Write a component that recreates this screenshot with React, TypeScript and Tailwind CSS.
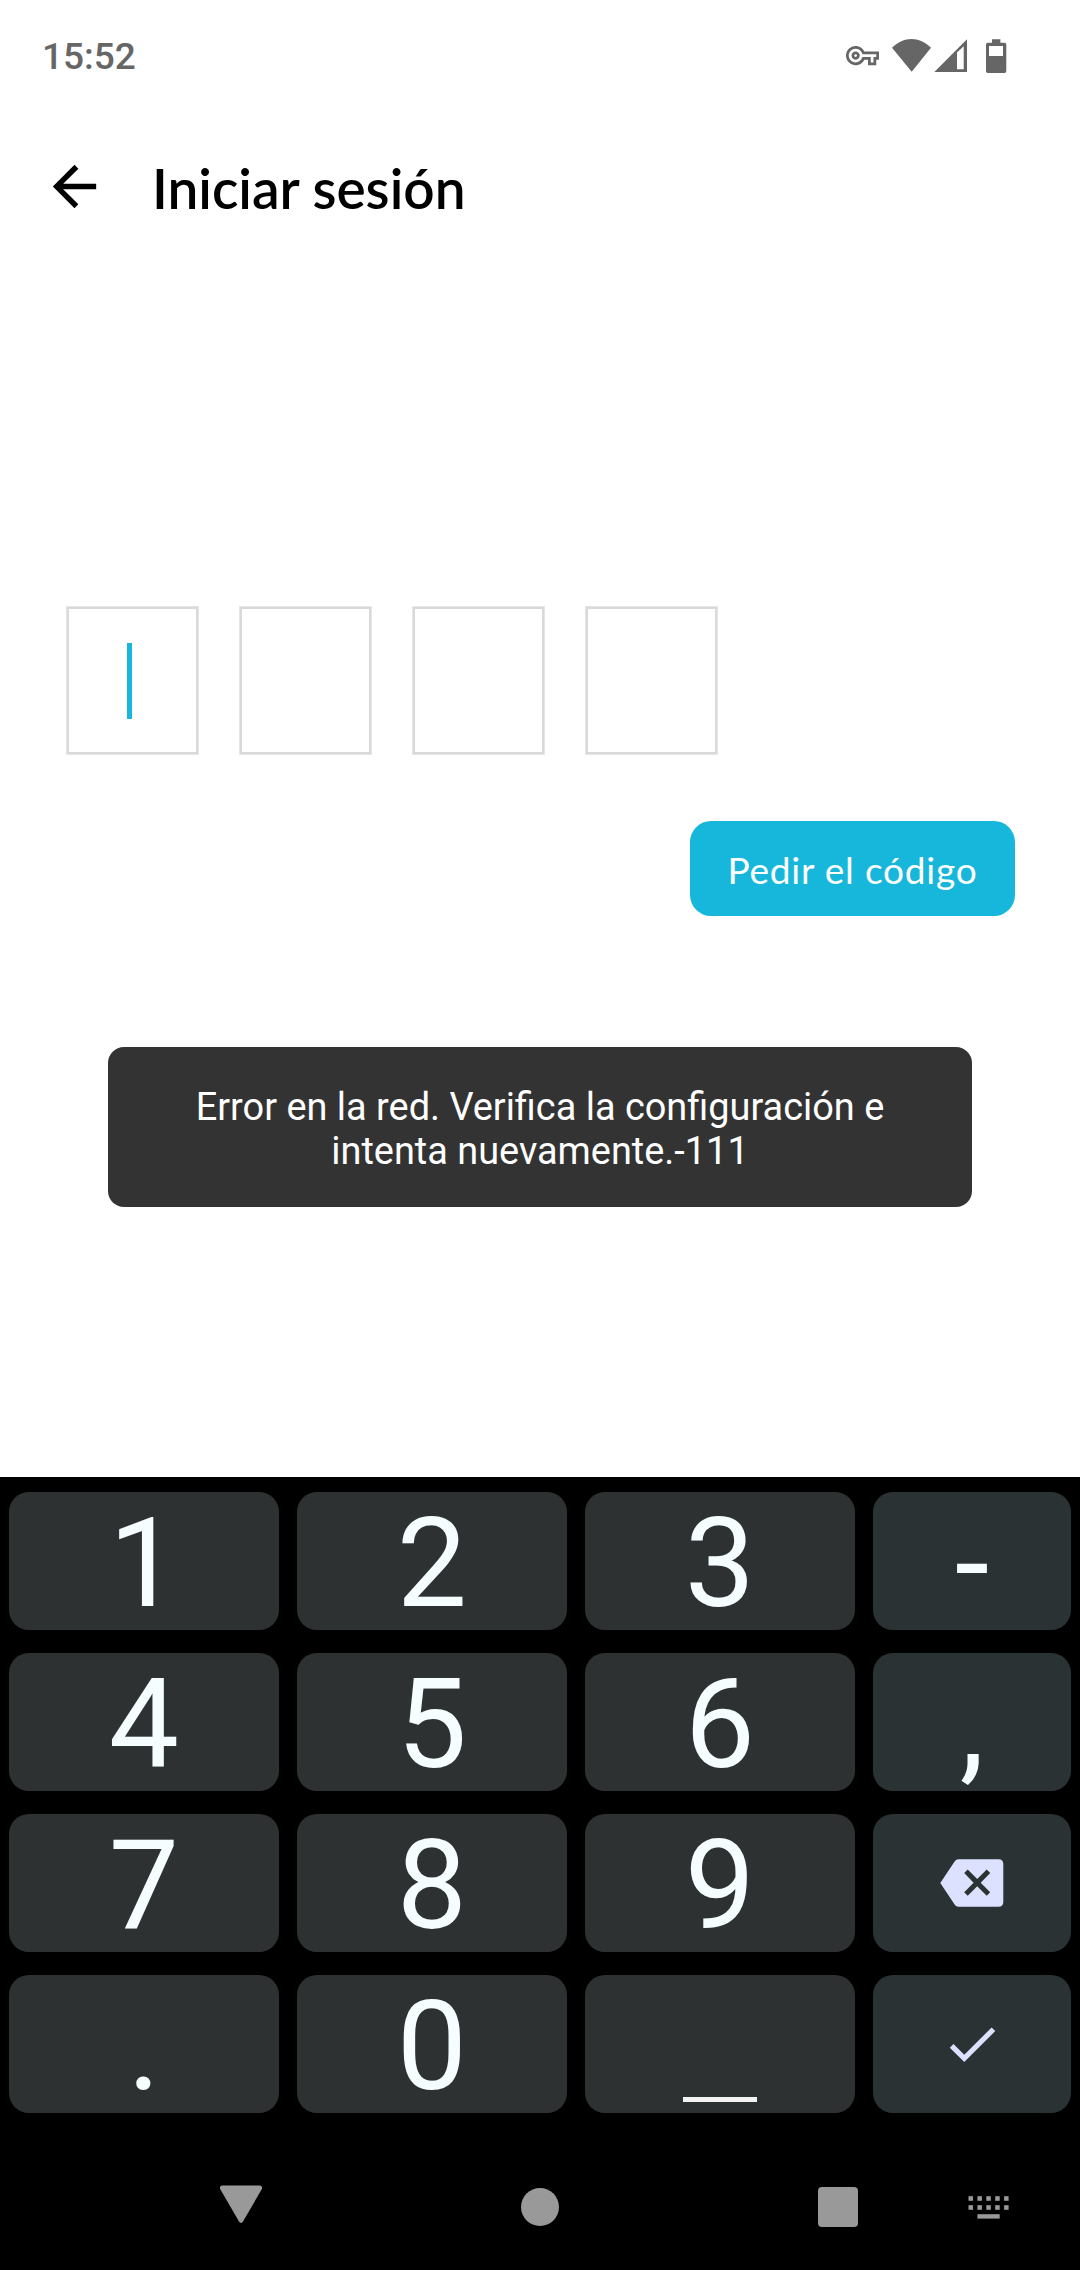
import type { ReactNode } from "react";
import { MdArrowBack, MdCheck, MdOutlineVpnKey } from "react-icons/md";

function StatusBar() {
  return (
    <header className="flex h-[111px] items-center justify-between pl-[42px] pr-[60px] text-[#666666]">
      <span className="mt-[2px] text-[37px] font-medium leading-none">15:52</span>
      <div className="flex h-[36px] items-center">
        <MdOutlineVpnKey className="size-[33px]" />
        <svg className="ml-[11px] h-[36px] w-[130px]" viewBox="890 37 130 36" fill="currentColor">
          <path d="M911.7 70.7 892 46.8C903.5 35.2 919.5 35.2 931 46.8Z" />
          <path fillRule="evenodd" d="M934.3 71 967 38.3V71ZM957 51.5V68.2H963.7V45.3Z" />
          <path
            fillRule="evenodd"
            d="M992 38.3h8.4v3.4h4.1q1.8 0 1.8 1.8v26.7q0 1.8-1.8 1.8h-16.7q-1.8 0-1.8-1.8V43.5q0-1.8 1.8-1.8h4.2ZM989 45v10h14V45Z"
          />
        </svg>
      </div>
    </header>
  );
}

function CodeInputs() {
  return (
    <div className="mt-[363px] flex gap-[39.85px] pl-[66px]">
      {[0, 1, 2, 3].map((slot) => (
        <div key={slot} className="h-[149px] w-[133px] border border-[#e6e6e6]">
          <div className="flex h-full items-center border-2 border-[#d9d9d9] pl-[58px]">
            {slot === 0 && <span className="h-[76px] w-[5px] bg-[#16b7da]" />}
          </div>
        </div>
      ))}
    </div>
  );
}

function Key({ side = false, children }: { side?: boolean; children: ReactNode }) {
  return (
    <button
      className={`flex h-[138px] items-center justify-center rounded-[20px] text-[125px] leading-[138px] text-[#f6fdff] ${
        side ? "bg-[#2a3234]" : "bg-[#2d3132]"
      }`}
    >
      {children}
    </button>
  );
}

function Label({ children }: { children: ReactNode }) {
  return <span className="mt-[6px]">{children}</span>;
}

function Keyboard() {
  return (
    <div className="grid grid-cols-[270px_270px_270px_198px] gap-x-[18px] gap-y-[23px] px-[9px] pt-[15px]">
      <Key><Label>1</Label></Key>
      <Key><Label>2</Label></Key>
      <Key><Label>3</Label></Key>
      <Key side><Label>-</Label></Key>
      <Key><Label>4</Label></Key>
      <Key><Label>5</Label></Key>
      <Key><Label>6</Label></Key>
      <Key side><Label>,</Label></Key>
      <Key><Label>7</Label></Key>
      <Key><Label>8</Label></Key>
      <Key><Label>9</Label></Key>
      <Key side>
        <svg className="h-[48px] w-[64px]" viewBox="0 0 64 48">
          <path
            fill="#dce1ff"
            fillRule="evenodd"
            d="M.3 24 14.6 2.6Q16 .3 18.5.3H58.5Q63.3.3 63.3 5V43Q63.3 47.7 58.5 47.7H18.5Q16 47.7 14.6 45.4ZM27.7 10.5 24.2 14 33.6 23.7 24.2 33.2 27.7 36.7 37.2 27.2 46.7 36.7 50.2 33.2 40.7 23.7 50.2 14 46.7 10.5 37.2 20Z"
          />
        </svg>
      </Key>
      <Key><Label>.</Label></Key>
      <Key><Label>0</Label></Key>
      <Key>
        <span className="mt-[111px] h-[5px] w-[74px] bg-[#f3f3f3]" />
      </Key>
      <Key side>
        <MdCheck className="size-[62px] text-[#dce1ff]" />
      </Key>
    </div>
  );
}

function NavBar() {
  return (
    <nav className="flex items-start pl-[220px] pt-[72px] text-[#999999]">
      <svg className="h-[42px] w-[43px]" viewBox="0 0 43 42" fill="currentColor">
        <path d="M2 .5H40Q42.6.8 42 3.8L23 36.6Q21 39.2 19 36.6L0 3.8Q-.6.8 2 .5Z" />
      </svg>
      <span className="ml-[258px] mt-[3px] size-[38px] rounded-full bg-current" />
      <span className="ml-[259px] mt-[2px] size-[40px] rounded-[4px] bg-current" />
      <svg className="ml-[110px] mt-[10px] h-[24px] w-[42px]" viewBox="968 2195 42 24" fill="currentColor">
        {[0, 1, 2, 3, 4].map((i) => (
          <g key={i}>
            <rect x={968.5 + i * 8.9} y="2196.2" width="4.5" height="4.6" />
            <rect x={968.5 + i * 8.9} y="2205.2" width="4.5" height="4.6" />
          </g>
        ))}
        <rect x="977.4" y="2214.2" width="22.3" height="4.4" />
      </svg>
    </nav>
  );
}

export default function App() {
  return (
    <div className="flex h-[2270px] w-[1080px] flex-col overflow-hidden bg-white font-['Roboto',sans-serif]">
      <main className="h-[1477px]">
        <StatusBar />
        <div className="flex h-[132px] items-start pl-[42px] pt-[43px] text-black">
          <MdArrowBack className="size-[65px]" />
          <h1 className="ml-[45px] mt-px whitespace-nowrap font-['Lato',sans-serif] text-[55px] font-semibold leading-[66px]">
            Iniciar sesión
          </h1>
        </div>
        <CodeInputs />
        <div className="mt-[66px] flex justify-end pr-[65px]">
          <button className="h-[95px] w-[325px] whitespace-nowrap rounded-[21px] bg-[#16b7da] pt-[2px] font-['Lato',sans-serif] text-[37px] tracking-[0.8px] text-white">
            Pedir el código
          </button>
        </div>
        <div className="mx-auto mt-[131px] flex h-[160px] w-[864px] items-center justify-center rounded-[16px] bg-[#333333] pt-[3px] text-center text-[37.9px] leading-[44px] text-white">
          <p className="whitespace-nowrap">
            Error en la red. Verifica la configuración e
            <br />
            intenta nuevamente.-111
          </p>
        </div>
      </main>
      <footer className="flex-1 bg-black">
        <Keyboard />
        <NavBar />
      </footer>
    </div>
  );
}
